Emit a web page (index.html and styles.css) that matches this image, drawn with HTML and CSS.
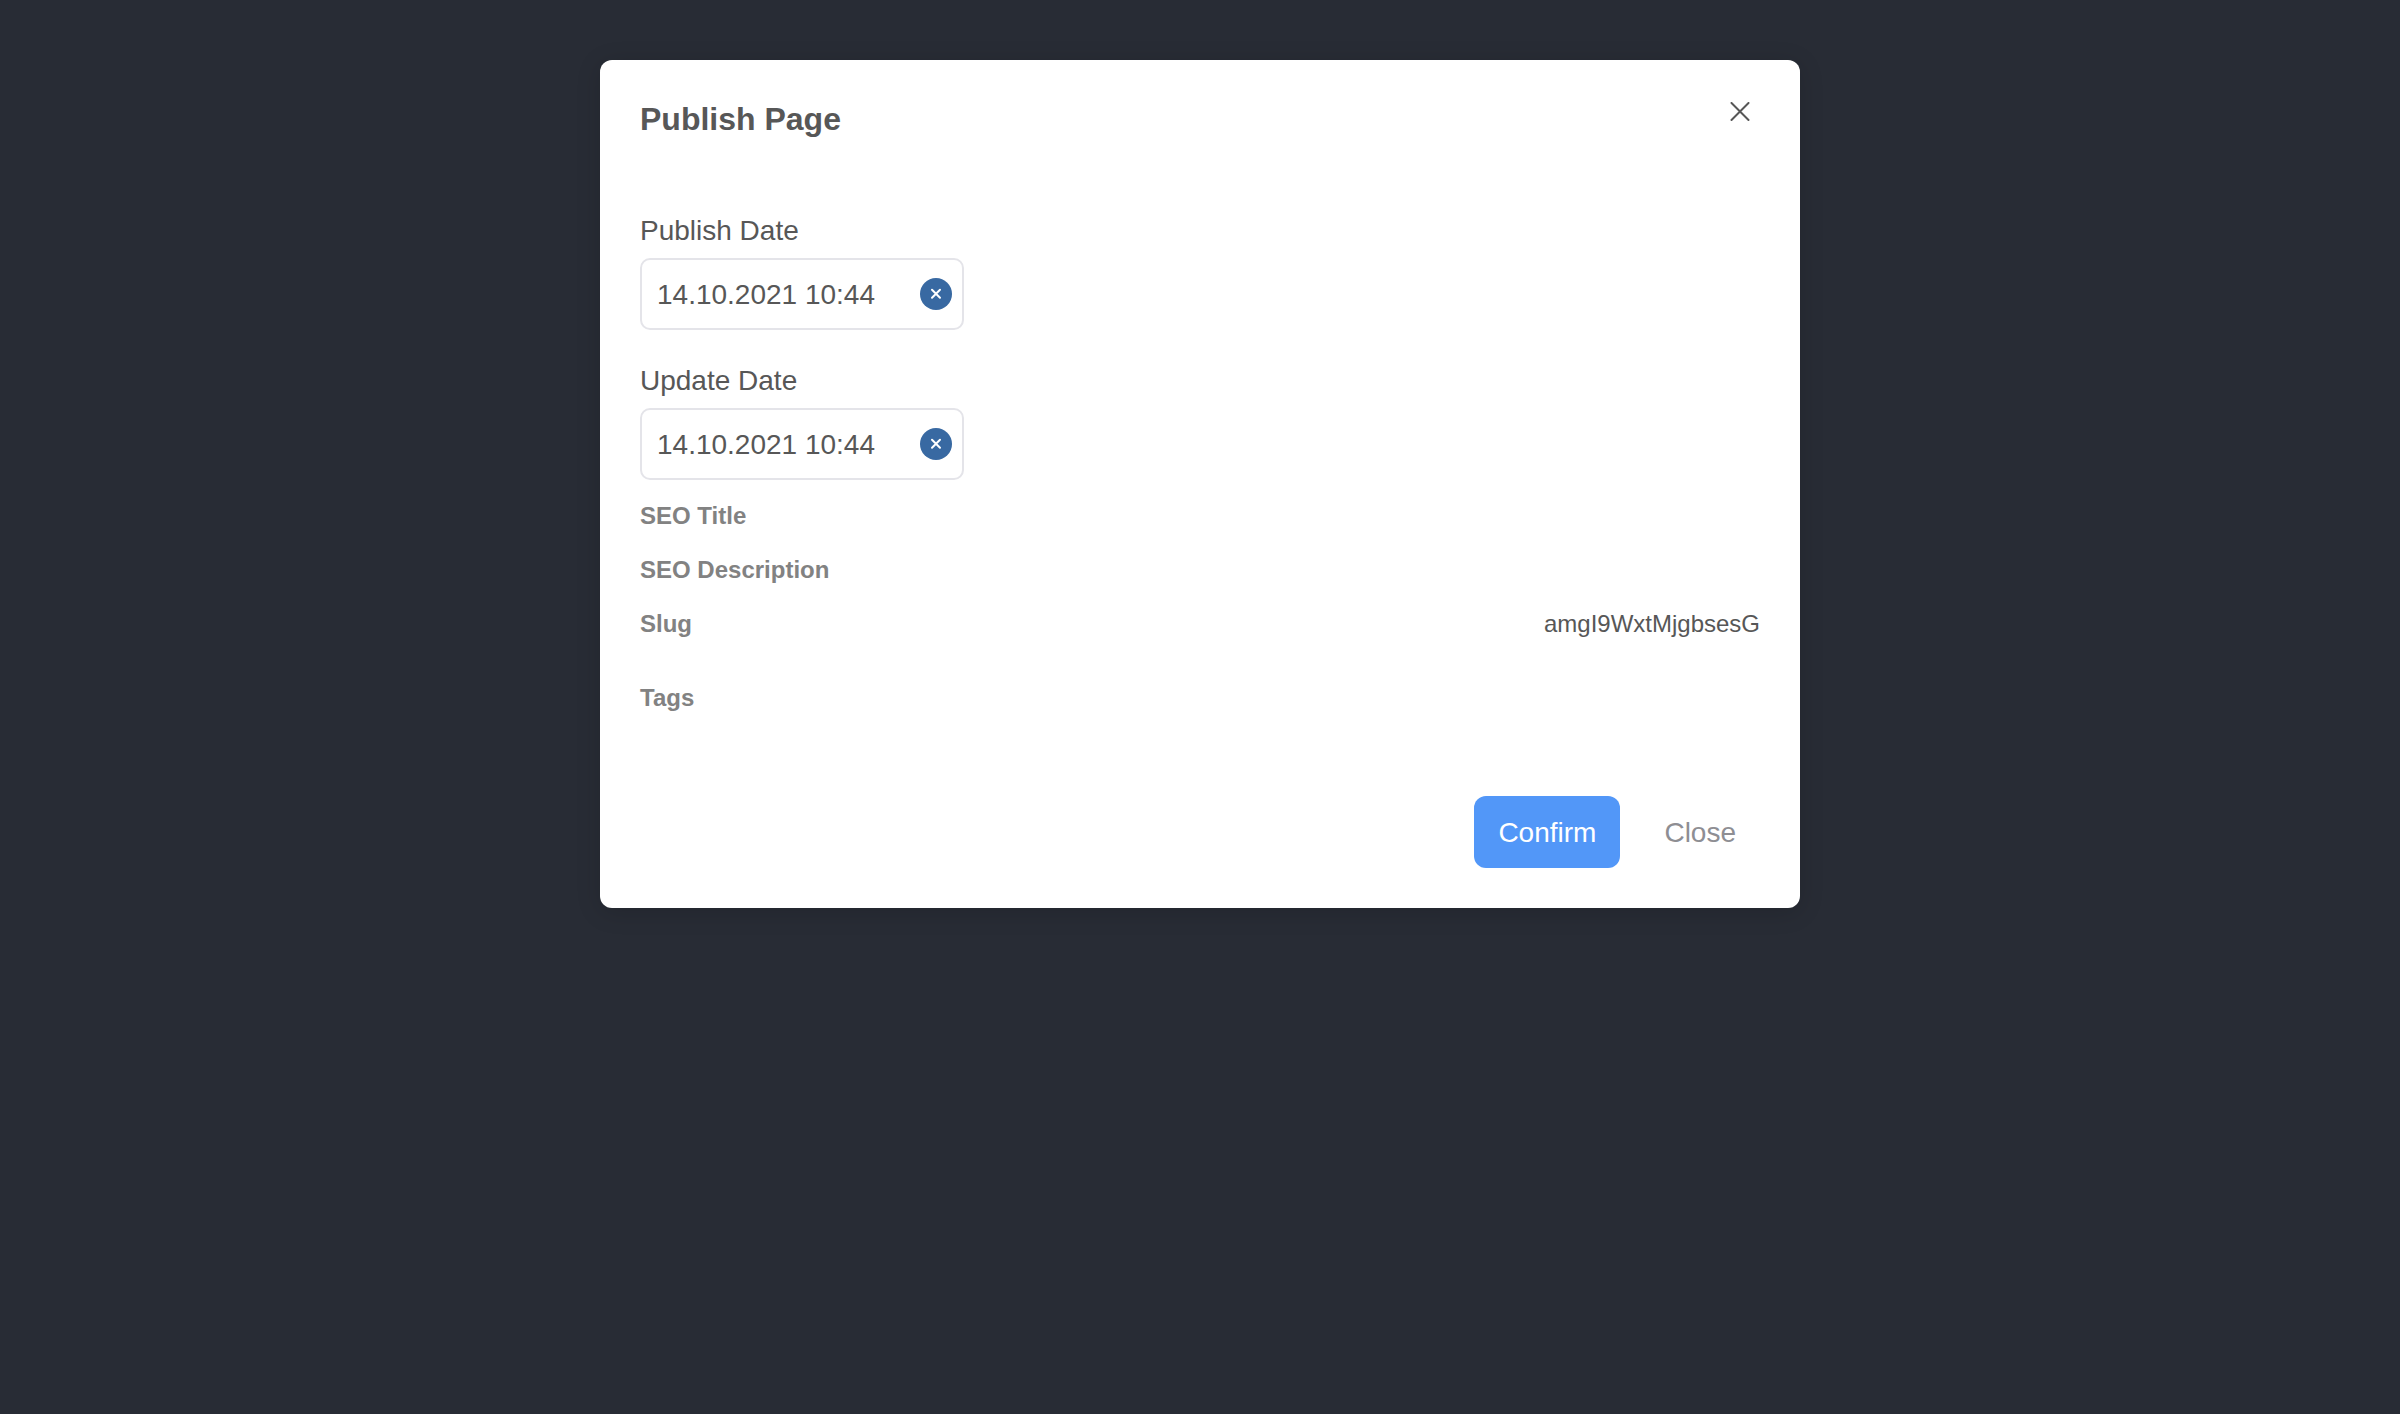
FILE: index.html
```html
<!DOCTYPE html>
<html lang="en">
<head>
<meta charset="utf-8">
<meta name="viewport" content="width=device-width, initial-scale=1">
<title>Publish Page</title>
<link rel="stylesheet" href="styles.css">
</head>
<body>
<main class="backdrop">
  <form class="dialog" role="dialog" aria-labelledby="dialog-title">
    <header class="dialog-header">
      <h1 class="dialog-title" id="dialog-title">Publish Page</h1>
      <button class="dismiss" type="button" aria-label="Dismiss">
        <svg width="20" height="20" viewBox="0 0 20 20" fill="none" stroke="currentColor" stroke-width="2" stroke-linecap="round" aria-hidden="true"><path d="M1.5 1 18.5 18M18.5 1 1.5 18"/></svg>
      </button>
    </header>

    <div class="fields">
      <div class="field">
        <label class="label" for="publish-date">Publish Date</label>
        <div class="date-box">
          <input class="date-input" id="publish-date" type="text" value="14.10.2021 10:44">
          <button class="clear" type="button" aria-label="Clear publish date">
            <svg width="12" height="12" viewBox="0 0 12 12" fill="none" stroke="currentColor" stroke-width="2" stroke-linecap="round" aria-hidden="true"><path d="M2 1.7 10 9.7M10 1.7 2 9.7"/></svg>
          </button>
        </div>
      </div>
      <div class="field">
        <label class="label" for="update-date">Update Date</label>
        <div class="date-box">
          <input class="date-input" id="update-date" type="text" value="14.10.2021 10:44">
          <button class="clear" type="button" aria-label="Clear update date">
            <svg width="12" height="12" viewBox="0 0 12 12" fill="none" stroke="currentColor" stroke-width="2" stroke-linecap="round" aria-hidden="true"><path d="M2 1.7 10 9.7M10 1.7 2 9.7"/></svg>
          </button>
        </div>
      </div>
    </div>

    <dl class="meta">
      <div class="meta-row"><dt>SEO Title</dt><dd></dd></div>
      <div class="meta-row"><dt>SEO Description</dt><dd></dd></div>
      <div class="meta-row"><dt>Slug</dt><dd>amgI9WxtMjgbsesG</dd></div>
      <div class="meta-row meta-tags"><dt>Tags</dt><dd></dd></div>
    </dl>

    <footer class="actions">
      <button class="button button-primary" type="submit">Confirm</button>
      <button class="button button-plain" type="button">Close</button>
    </footer>
  </form>
</main>
</body>
</html>
```
FILE: styles.css
```css
* {
  box-sizing: border-box;
}

body {
  margin: 0;
  min-height: 100vh;
  background: #282c35;
  color: #575757;
  font-family: "Liberation Sans", Arial, sans-serif;
  font-size: 28px;
  line-height: 38px;
}

button,
input {
  margin: 0;
  padding: 0;
  border: 0;
  background: none;
  color: inherit;
  font: inherit;
}

button {
  cursor: pointer;
}

.backdrop {
  display: flex;
  justify-content: center;
  align-items: flex-start;
  padding: 60px 20px;
}

.dialog {
  width: 100%;
  max-width: 1200px;
  padding: 32px 40px 40px;
  border-radius: 12px;
  background: #fff;
  box-shadow: 0 4px 24px rgba(0, 0, 0, 0.15);
}

.dialog-header {
  display: flex;
  justify-content: space-between;
  align-items: flex-start;
}

.dialog-title {
  margin: 8px 0 0;
  font-size: 32px;
}

.dismiss {
  display: grid;
  place-items: center;
  width: 40px;
  height: 40px;
}

.fields {
  display: grid;
  gap: 32px;
  margin-top: 74px;
}

.field {
  display: grid;
  justify-items: start;
  gap: 8px;
}

.date-box {
  display: flex;
  align-items: center;
  width: 324px;
  max-width: 100%;
  height: 72px;
  padding: 0 10px 0 15px;
  border: 2px solid #e4e4e9;
  border-radius: 10px;
}

.date-input {
  flex: 1;
  min-width: 0;
  height: 40px;
  padding-top: 2px;
}

.clear {
  display: grid;
  place-items: center;
  flex: none;
  width: 32px;
  height: 32px;
  border-radius: 50%;
  background: #3869a2;
  color: #fff;
}

.meta {
  display: grid;
  gap: 18px;
  margin: 18px 0 0;
  font-size: 24px;
  line-height: 36px;
}

.meta-row {
  display: flex;
  justify-content: space-between;
  gap: 24px;
}

.meta-row dt {
  color: #828282;
  font-weight: 700;
}

.meta-row dd {
  margin: 0;
}

.meta-tags {
  margin-top: 20px;
}

.actions {
  display: flex;
  justify-content: flex-end;
  gap: 20px;
  margin-top: 80px;
}

.button {
  height: 72px;
  padding: 2px 24px 0;
  border-radius: 12px;
}

.button-primary {
  background: #5297f8;
  color: #fff;
}

.button-plain {
  color: #8e8e93;
}
```
